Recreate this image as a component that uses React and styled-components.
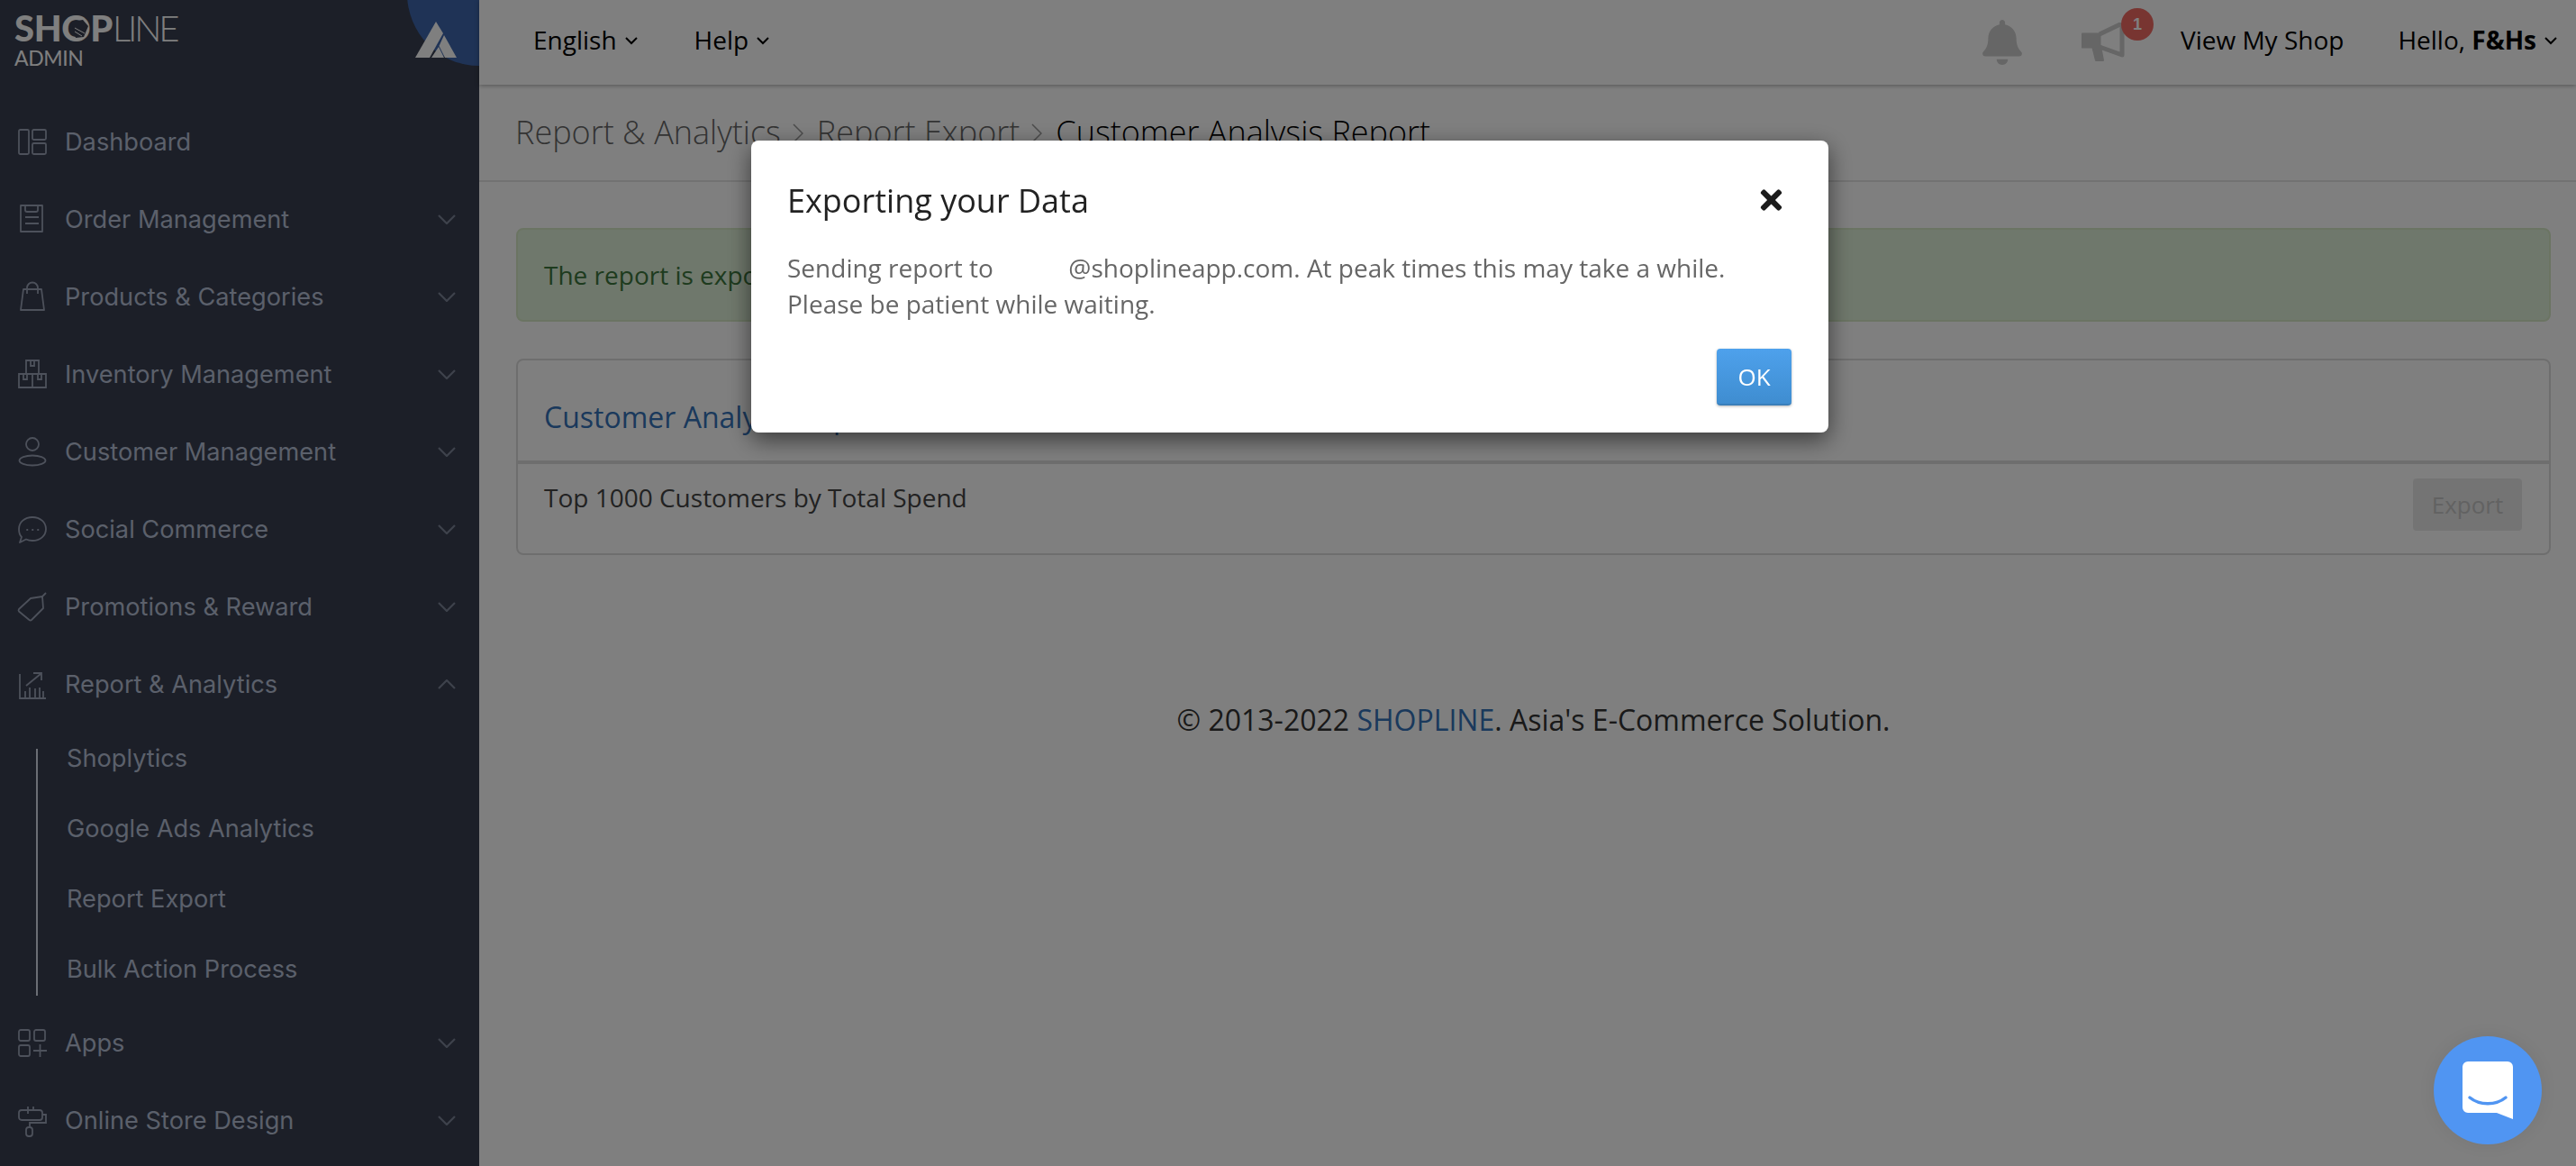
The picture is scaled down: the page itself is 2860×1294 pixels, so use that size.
import React from 'react';
import styled, { createGlobalStyle } from 'styled-components';
import { FaBell, FaTimes } from 'react-icons/fa';

const Global = createGlobalStyle`
  html, body { margin: 0; padding: 0; height: 100%; overflow: hidden; background: #fff; }
  #root { height: 100%; }
  * { box-sizing: border-box; }
`;
const Page = styled.div`
  display: flex; width: 2860px; height: 1294px; overflow: hidden;
  font-family: "Open Sans", "Liberation Sans", sans-serif; color: #333;
`;
const Sidebar = styled.aside`
  position: relative; flex: 0 0 532px; height: 100%; background: #383e50; overflow: hidden;
  font-family: Inter, "Noto Sans", sans-serif; color: #b6c0d6;
`;
const Brand = styled.div`
  height: 114px; padding: 7px 0 0 16px; color: #fff;
`;
const LogoWord = styled.div`
  position: relative; display: inline-block; font-family: Lato, sans-serif; font-size: 40px; line-height: 48px;
  font-weight: 900; letter-spacing: -0.4px;
`;
const LogoThin = styled.span` font-weight: 300; letter-spacing: -3.2px; `;
const LogoTag = styled.svg` position: absolute; left: 60px; top: 13px; width: 24px; height: 24px; `;
const LogoSub = styled.div`
  font-family: Lato, sans-serif; font-size: 23px; line-height: 22px; font-weight: 400; margin-top: -2px; letter-spacing: -0.4px;
`;
const Corner = styled.div`
  position: absolute; left: 452px; top: -87px; width: 160px; height: 160px; border-radius: 50%; background: #3e66ac;
`;
const CornerMark = styled.svg` position: absolute; left: 460px; top: 24px; width: 48px; height: 40px; `;
const Nav = styled.nav` display: flex; flex-direction: column; `;
const Row = styled.div`
  display: flex; align-items: center; height: 86px; padding: 0 26px 0 20px; font-size: 27.2px; font-weight: 400;
`;
const RowIcon = styled.svg`
  flex: 0 0 32px; width: 32px; height: 32px; margin-right: 20px; fill: none; stroke: #9aa2b6; stroke-width: 1.8; overflow: visible;
`;
const RowLabel = styled.span` flex: 1; `;
const Arrow = styled.svg` width: 20px; height: 11px; fill: none; stroke: #7c8498; stroke-width: 2.2; `;
const SubList = styled.div`
  position: relative; display: flex; flex-direction: column;
  &::before { content: ""; position: absolute; left: 40px; top: 29px; bottom: 9px; width: 2px; background: #d6dcea; }
`;
const SubRow = styled.div`
  display: flex; align-items: center; height: 78px; padding-left: 74px; font-size: 27.2px;
`;
const Main = styled.main` flex: 1; display: flex; flex-direction: column; min-width: 0; background: #fff; `;
const Topbar = styled.header`
  display: flex; align-items: center; height: 94px; padding: 0 20px 0 60px; font-size: 28px; color: #000;
  box-shadow: 0 1px 5px rgba(0,0,0,.35); position: relative;
`;
const TopItem = styled.div`
  display: flex; align-items: center; gap: 8px; margin: -6px ${p => p.$gap || 0}px 0 0; white-space: nowrap;
`;
const Spacer = styled.div` flex: 1; `;
const SmallArrow = styled.svg` width: 16px; height: 10px; fill: none; stroke: #000; stroke-width: 2; margin-top: 2px; `;
const BellIcon = styled(FaBell)` width: 44px; height: 50px; color: #ccc; margin-right: 66px; `;
const HornWrap = styled.div` position: relative; width: 48px; height: 44px; margin-right: 62px; `;
const Horn = styled.svg` width: 48px; height: 44px; fill: #ccc; stroke: #ccc; `;
const Badge = styled.span`
  position: absolute; left: 44px; top: -16px; width: 36px; height: 36px; border-radius: 50%;
  background: #f06a63; color: #fff; display: flex; align-items: center; justify-content: center;
  font: 700 18px "Liberation Sans", sans-serif;
`;
const Crumbs = styled.div`
  display: flex; align-items: center; height: 108px; padding: 0 0 2px 40px; font-size: 36px; font-weight: 300; color: #666;
  border-bottom: 2px solid #e4e4e4;
`;
const CrumbSep = styled.svg` width: 12px; height: 22px; margin: 4px 15px 0 13px; fill: none; stroke: #999; stroke-width: 1.5; `;
const CrumbNow = styled.span` color: #000; `;
const Content = styled.div` display: flex; flex-direction: column; padding: 51px 28px 0 41px; `;
const Alert = styled.div`
  height: 104px; display: flex; align-items: center; padding: 0 29px; font-size: 28px; color: #3c763d;
  background: #dff0d8; border: 2px solid #d6e9c6; border-radius: 8px;
`;
const Panel = styled.section`
  margin-top: 41px; height: 218px; border: 2px solid #ddd; border-radius: 8px; display: flex; flex-direction: column;
`;
const PanelHead = styled.div`
  height: 115px; padding: 43px 29px 0; font-size: 32px; line-height: 40px; color: #3572b8; border-bottom: 4px solid #ddd;
`;
const PanelBody = styled.div`
  flex: 1; display: flex; justify-content: space-between; align-items: flex-start; padding: 17px 29px 14px; font-size: 28px; line-height: 40px; color: #444;
`;
const ExportBtn = styled.div`
  width: 121px; height: 58px; margin: -1px 1px 0 0; border-radius: 4px; background: #e9e9e9; color: #c4c4c4;
  display: flex; align-items: center; justify-content: center; font-size: 26px;
`;
const Foot = styled.div`
  margin-top: 163px; text-align: center; font-size: 32px; line-height: 40px; color: #333;
`;
const FootLink = styled.span` color: #3572b8; `;
const Backdrop = styled.div` position: fixed; inset: 0; background: rgba(0,0,0,.5); `;
const Modal = styled.div`
  position: fixed; left: 834px; top: 156px; width: 1196px; height: 324px; padding: 43px 40px 30px; background: #fff;
  border-radius: 8px; box-shadow: 0 8px 26px rgba(0,0,0,.55); display: flex; flex-direction: column;
`;
const ModalHead = styled.div` display: flex; align-items: center; justify-content: space-between; height: 46px; `;
const ModalTitle = styled.div` font-size: 36px; color: #222; font-weight: 400; `;
const CloseIcon = styled(FaTimes)` width: 35px; height: 34px; color: #1c1c1c; margin-right: 6px; `;
const ModalBody = styled.div` margin-top: 32px; font-size: 28px; line-height: 40px; color: #666; `;
const Redact = styled.span` display: inline-block; width: 69px; `;
const ModalFoot = styled.div` display: flex; justify-content: flex-end; margin-top: 30px; padding-right: 1px; `;
const OkBtn = styled.div`
  width: 83px; height: 63px; display: flex; align-items: center; justify-content: center; border-radius: 4px;
  background: linear-gradient(#4ea1ec, #3f8dd0); border-bottom: 2px solid #3a7fba; color: #fff; font-size: 26px;
  box-shadow: 0 1px 3px rgba(0,0,0,.3);
`;
const Chat = styled.div`
  position: fixed; left: 2702px; top: 1150px; width: 120px; height: 120px; border-radius: 50%; background: #5095f2;
  box-shadow: 0 0 24px rgba(0,0,0,.08);
`;
const ChatIcon = styled.svg` display: block; width: 120px; height: 120px; `;

const Down = () => <Arrow viewBox="0 0 20 11"><path d="M1 1l9 9 9-9" /></Arrow>;
const Up = () => <Arrow viewBox="0 0 20 11"><path d="M1 10l9-9 9 9" /></Arrow>;
const Small = () => <SmallArrow viewBox="0 0 16 10"><path d="M2 2l6 6 6-6" /></SmallArrow>;
const Sep = () => <CrumbSep viewBox="0 0 12 22"><path d="M1 1l10 10L1 21" /></CrumbSep>;

const icons = {
  dash: <><rect x="1" y="3" width="11" height="27" rx="1.5" /><rect x="16" y="3" width="15" height="11" rx="1.5" /><rect x="16" y="18" width="15" height="12" rx="1.5" /></>,
  order: <><path d="M3 1h24v29H3z" strokeLinejoin="round" /><path d="M8 1v5q0 2 2 2h10q2 0 2-2V1M8 14h15M8 21h15" /></>,
  bag: <><path d="M6 8h20l3 23H3z" strokeLinejoin="round" /><path d="M10 13V6.500a6 6 0 0 1 12 0V13" /></>,
  inv: <><path d="M9 16V1h14v15M1 16h30v15H1zM16 16v15" /><path d="M14 1v6h4V1M6 16v6h4v-6M22 16v6h4v-6" /></>,
  cust: <><circle cx="16" cy="8" r="7" /><ellipse cx="16" cy="26" rx="14.500" ry="5.500" /></>,
  social: <><path d="M16 3c8.500 0 15 5.500 15 13s-6.500 13-15 13c-2.500 0-5-.5-7-1.500L2 31l2-6C2 23 1 19.500 1 16 1 8.500 7.500 3 16 3z" strokeLinejoin="round" /><path d="M10 17h.5M16 17h.5M22 17h.5" strokeLinecap="round" /></>,
  promo: <><path d="M1 19L14 7l13-2 1 13-13 13a2 2 0 0 1-2.500 0L1 21.500a2 2 0 0 1 0-2.500z" strokeLinejoin="round" /><path d="M26 6l5-5" /></>,
  report: <><path d="M2 5v27h29" /><path d="M8 32v-8M13 32V20M19 32v-11M24 32V20M28 32v-8" /><path d="M9 18L25 5M17 4h9v8" /></>,
  apps: <><rect x="1" y="2" width="12" height="12" rx="2" /><rect x="18" y="2" width="12" height="12" rx="2" /><rect x="1" y="19" width="12" height="12" rx="2" /><path d="M17 25h15M24.500 18v14" /></>,
  store: <><rect x="1" y="5" width="26" height="11" rx="3" /><path d="M27 10h4v9H13v5M11 1v8M17 1v4" /><rect x="9" y="24" width="7" height="10" rx="3" /></>,
};

const items = [
  ['dash', 'Dashboard', null],
  ['order', 'Order Management', 'down'],
  ['bag', 'Products & Categories', 'down'],
  ['inv', 'Inventory Management', 'down'],
  ['cust', 'Customer Management', 'down'],
  ['social', 'Social Commerce', 'down'],
  ['promo', 'Promotions & Reward', 'down'],
  ['report', 'Report & Analytics', 'up'],
];
const subs = ['Shoplytics', 'Google Ads Analytics', 'Report Export', 'Bulk Action Process'];
const after = [['apps', 'Apps', 'down'], ['store', 'Online Store Design', 'down']];

const MenuRow = ({ icon, label, dir }) => (
  <Row>
    <RowIcon viewBox="0 0 32 32">{icons[icon]}</RowIcon>
    <RowLabel>{label}</RowLabel>
    {dir === 'down' && <Down />}
    {dir === 'up' && <Up />}
  </Row>
);

export default function App() {
  return (
    <Page>
      <Global />
      <Sidebar>
        <Corner />
        <CornerMark viewBox="0 0 48 40">
          <path fill="#fff" d="M24 0l8 13-15 27H1z" />
          <path fill="#fff" d="M33 15l14 25H34l-6.500-13z" />
          <path fill="#fff" d="M27 28l6 12H19z" />
        </CornerMark>
        <Brand>
          <LogoWord>
            SHOP<LogoThin>LINE</LogoThin>
            <LogoTag viewBox="0 0 24 24"><path fill="#383e50" d="M3 4l13-2 6 7-5 12-9 1z" /><path stroke="#fff" strokeWidth="1" d="M7 11l11 6M7 15l8 5" /></LogoTag>
          </LogoWord>
          <LogoSub>ADMIN</LogoSub>
        </Brand>
        <Nav>
          {items.map(([i, l, d]) => <MenuRow key={l} icon={i} label={l} dir={d} />)}
          <SubList>{subs.map(s => <SubRow key={s}>{s}</SubRow>)}</SubList>
          {after.map(([i, l, d]) => <MenuRow key={l} icon={i} label={l} dir={d} />)}
        </Nav>
      </Sidebar>
      <Main>
        <Topbar>
          <TopItem $gap={62}>English <Small /></TopItem>
          <TopItem>Help <Small /></TopItem>
          <Spacer />
          <BellIcon />
          <HornWrap>
            <Horn viewBox="0 0 48 44">
              <path d="M1 13h19v14H1z" strokeLinejoin="round" strokeWidth="3" />
              <path d="M20 13L45 1v35L20 27" fill="none" strokeWidth="5" strokeLinejoin="round" />
              <path d="M12 26h9l3 16h-8z" strokeLinejoin="round" strokeWidth="2" />
            </Horn>
            <Badge>1</Badge>
          </HornWrap>
          <TopItem $gap={60}>View My Shop</TopItem>
          <TopItem><span>Hello, <b>F&amp;Hs</b></span> <Small /></TopItem>
        </Topbar>
        <Crumbs>
          Report &amp; Analytics<Sep />Report Export<Sep /><CrumbNow>Customer Analysis Report</CrumbNow>
        </Crumbs>
        <Content>
          <Alert>The report is exporting, please check your email.</Alert>
          <Panel>
            <PanelHead>Customer Analysis Report</PanelHead>
            <PanelBody>
              <span>Top 1000 Customers by Total Spend</span>
              <ExportBtn>Export</ExportBtn>
            </PanelBody>
          </Panel>
          <Foot>© 2013-2022 <FootLink>SHOPLINE</FootLink>. Asia's E-Commerce Solution.</Foot>
        </Content>
      </Main>
      <Backdrop />
      <Modal>
        <ModalHead>
          <ModalTitle>Exporting your Data</ModalTitle>
          <CloseIcon />
        </ModalHead>
        <ModalBody>
          Sending report to <Redact /> @shoplineapp.com. At peak times this may take a while. Please be patient while waiting.
        </ModalBody>
        <ModalFoot><OkBtn>OK</OkBtn></ModalFoot>
      </Modal>
      <Chat>
        <ChatIcon viewBox="0 0 120 120">
          <path fill="#fff" d="M38 28h44a6 6 0 0 1 6 6v58l-18-7H38a6 6 0 0 1-6-6V34a6 6 0 0 1 6-6z" />
          <path fill="none" stroke="#5095f2" strokeWidth="3.500" strokeLinecap="round" d="M40 68c11 9 29 9 40 0" />
        </ChatIcon>
      </Chat>
    </Page>
  );
}
